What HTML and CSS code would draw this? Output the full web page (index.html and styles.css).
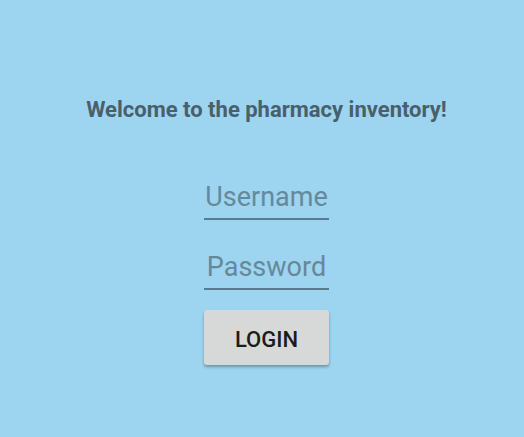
FILE: index.html
```html
<!DOCTYPE html>
<html>
<head>
<meta charset="utf-8">
<link rel="stylesheet" href="styles.css">
</head>
<body>
<main class="screen">
  <h1 class="title">Welcome to the pharmacy inventory!</h1>
  <form class="form">
    <div class="field"><span class="hint">Username</span></div>
    <div class="field"><span class="hint">Password</span></div>
    <button type="button" class="btn">LOGIN</button>
  </form>
</main>
</body>
</html>
```

FILE: styles.css
```css
html, body {
  margin: 0;
  padding: 0;
  background: #9dd4ef;
}
.screen {
  width: 524px;
  height: 437px;
  box-sizing: border-box;
  padding-left: 9px;
  display: flex;
  flex-direction: column;
  align-items: center;
  font-family: Roboto, "Liberation Sans", sans-serif;
}
.title {
  margin: 97px 0 0 0;
  font-size: 22px;
  font-weight: 700;
  line-height: 26px;
  color: #4a5f6c;
}
.form {
  margin-top: 58px;
  display: flex;
  flex-direction: column;
  align-items: center;
}
.field {
  width: 125px;
  border-bottom: 2px solid #587c8e;
  display: flex;
  justify-content: center;
  padding-bottom: 5px;
  margin-bottom: 31px;
}
.field:nth-child(2) {
  margin-bottom: 20px;
}
.hint {
  font-size: 27px;
  line-height: 32px;
  color: #66899a;
}
.btn {
  width: 125px;
  height: 55px;
  border: none;
  border-radius: 3px;
  background: #d7d8d8;
  font-family: Roboto, "Liberation Sans", sans-serif;
  font-weight: 500;
  font-size: 22px;
  color: #1c1c1c;
  box-shadow: 0 2px 3px rgba(0,0,0,0.3);
  padding: 3px 0 0 0;
}
```
